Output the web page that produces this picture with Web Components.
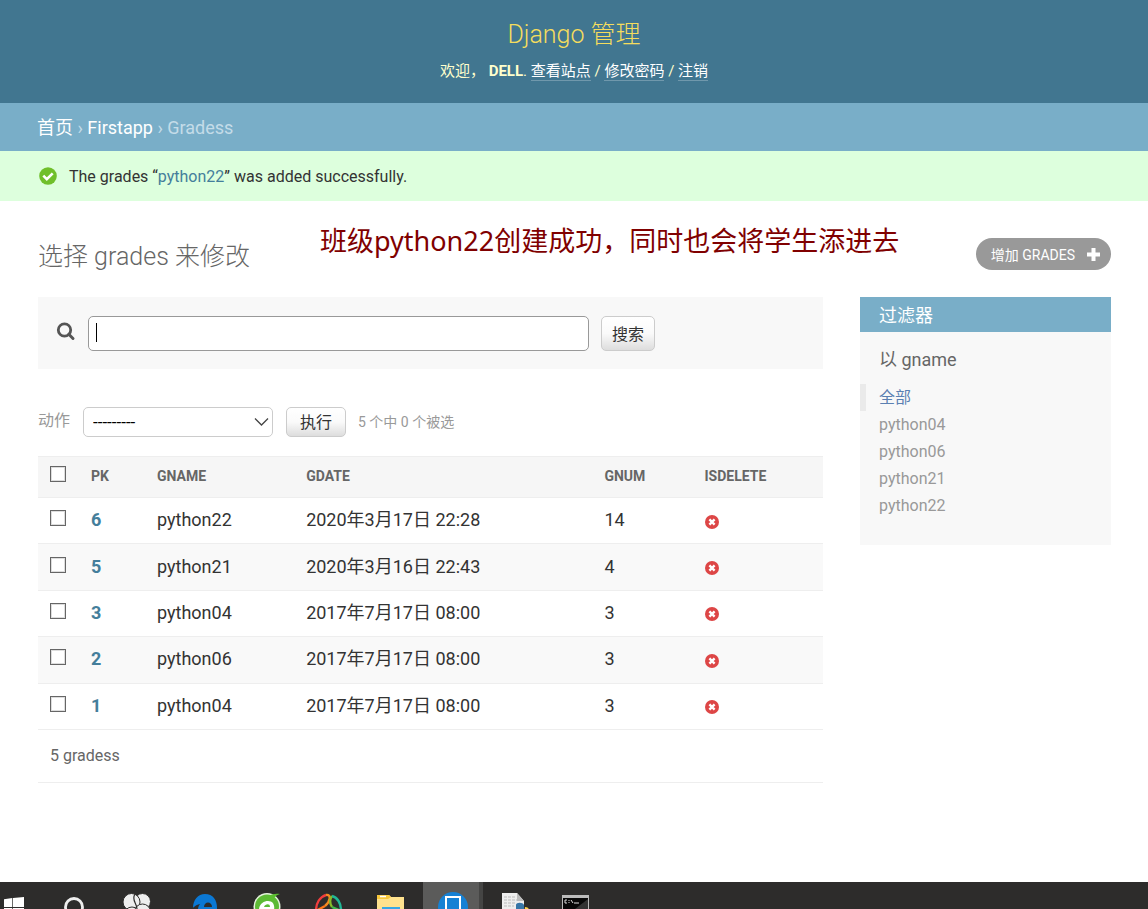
<!DOCTYPE html>
<html lang="zh-CN">
<head>
<meta charset="utf-8">
<title>选择 grades 来修改 | Django 管理</title>
<style>
  body { margin: 0; background: #fff; color: #333; font-family: Roboto, "Noto Sans CJK SC", sans-serif; font-size: 16px; }
</style>
</head>
<body>
<admin-page>
  <site-header slot="header" user="DELL">Django 管理</site-header>
  <bread-crumbs slot="header"></bread-crumbs>
  <success-message slot="header">The grades “<a href="#python22">python22</a>” was added successfully.</success-message>
  <page-note slot="note">班级python22创建成功，同时也会将学生添进去</page-note>
  <page-title slot="title">选择 grades 来修改</page-title>
  <add-button slot="title">增加 GRADES</add-button>
  <search-bar slot="list"></search-bar>
  <action-bar slot="list"></action-bar>
  <result-table slot="list"></result-table>
  <filter-panel slot="filter"></filter-panel>
  <task-bar slot="footer"></task-bar>
</admin-page>

<script>
const define = (name, html, setup) => {
  const template = document.createElement('template');
  template.innerHTML = html;
  customElements.define(name, class extends HTMLElement {
    constructor() {
      super();
      this.attachShadow({ mode: 'open' }).append(template.content.cloneNode(true));
    }
    connectedCallback() { if (setup) setup(this, this.shadowRoot); }
  });
};

define('admin-page', `
<style>
  :host { display: flex; flex-direction: column; min-height: 100vh; }
  main { flex: 1; position: relative; padding: 36px 37px 40px 38px; }
  .title { display: flex; justify-content: space-between; align-items: flex-start; height: 60px; }
  .columns { display: flex; align-items: flex-start; gap: 37px; }
  .list { flex: 1; min-width: 0; }
  .filter { flex: 0 0 251px; }
  .note { position: absolute; top: 20px; left: 320px; }
</style>
<slot name="header"></slot>
<main>
  <div class="title"><slot name="title"></slot></div>
  <div class="columns">
    <div class="list"><slot name="list"></slot></div>
    <div class="filter"><slot name="filter"></slot></div>
  </div>
  <div class="note"><slot name="note"></slot></div>
</main>
<slot name="footer"></slot>`);

define('site-header', `
<style>
  :host { display: block; background: #417690; color: #ffc; text-align: center; padding: 18px 37px 20px; }
  h1 { margin: 0; font-size: 25px; line-height: 34px; font-weight: 300; color: #f5dd5d; }
  nav { margin-top: 8px; font-size: 15px; line-height: 23px; }
  a { color: #fff; text-decoration: none; border-bottom: 1px solid rgba(255,255,255,.25); }
</style>
<h1><slot></slot></h1>
<nav>欢迎， <strong></strong>. <a href="#site">查看站点</a> / <a href="#password">修改密码</a> / <a href="#logout">注销</a></nav>`,
(host, root) => { root.querySelector('strong').textContent = host.getAttribute('user'); });

define('bread-crumbs', `
<style>
  :host { display: block; background: #79aec8; color: #c4dce8; padding: 13px 37px 11px; font-size: 18px; line-height: 24px; }
  a { color: #fff; text-decoration: none; }
</style>
<nav><a href="#home">首页</a> › <a href="#firstapp">Firstapp</a> › Gradess</nav>`);

define('success-message', `
<style>
  :host { display: flex; align-items: center; gap: 12px; background: #dfd; padding: 14px 39px 12px; font-size: 16px; line-height: 24px; }
  svg { width: 18px; height: 18px; margin-bottom: 2px; }
  ::slotted(a) { color: #447e9b; text-decoration: none; }
</style>
<svg viewBox="0 0 18 18"><circle cx="9" cy="9" r="8.8" fill="#70bf2b"/><path d="M4.300 8.700 7.800 12.200 13.700 6.300" fill="none" stroke="#fff" stroke-width="2.600"/></svg>
<span><slot></slot></span>`);

define('page-note', `
<style>:host { display: block; color: #800000; font: 27px/40px "Noto Sans", "Noto Sans CJK SC", sans-serif; white-space: nowrap; }</style>
<slot></slot>`);

define('page-title', `
<style>h1 { margin: 0; font-size: 25px; line-height: 40px; font-weight: 300; color: #666; }</style>
<h1><slot></slot></h1>`);

define('add-button', `
<style>
  a { display: flex; align-items: center; gap: 12px; height: 32px; padding: 0 11px 0 15px; margin-top: 1px; border-radius: 16px; background: #999; color: #fff; font-size: 14px; text-decoration: none; }
  svg { width: 13px; height: 13px; }
</style>
<a href="#add"><slot></slot><svg viewBox="0 0 13 13"><path d="M6.500 0v13M0 6.500h13" stroke="#fff" stroke-width="4"/></svg></a>`);

define('search-bar', `
<style>
  form { display: flex; align-items: center; background: #f8f8f8; height: 72px; padding: 0 18px; margin: 0; }
  svg { width: 20px; height: 20px; margin: 0 12px 2px 0; display: block; }
  .field { position: relative; flex: 0 1 501px; margin-right: 12px; }
  input { display: block; box-sizing: border-box; width: 100%; height: 35px; border: 1px solid #999; border-radius: 5px; padding: 0 7px; font: inherit; background: #fff; outline: none; }
  .caret { position: absolute; left: 8px; top: 7px; width: 1px; height: 19px; background: #000; }
  button { height: 35px; padding: 0 10px; border: 1px solid #ccc; border-radius: 5px; background: linear-gradient(#fff, #fafafa 50%, #ddd); color: #333; font: inherit; }
</style>
<form>
  <label for="q" aria-label="搜索"><svg viewBox="0 0 20 20"><circle cx="8.500" cy="8" r="6.200" fill="none" stroke="#555" stroke-width="2.800"/><path d="m12.800 12.300 4.200 4.200" stroke="#555" stroke-width="3" stroke-linecap="round"/></svg></label>
  <span class="field"><input id="q" type="text"><i class="caret"></i></span>
  <button type="button">搜索</button>
</form>`);

define('action-bar', `
<style>
  :host { display: flex; align-items: center; height: 30px; padding: 38px 0 19px; color: #999; font-size: 16px; }
  label { display: flex; align-items: center; gap: 13px; line-height: 26px; }
  .text { padding-bottom: 2px; }
  .select { position: relative; display: block; width: 190px; }
  select { appearance: none; display: block; box-sizing: border-box; width: 100%; height: 30px; border: 1px solid #ccc; border-radius: 5px; background: #fff; color: #000; padding: 0 9px; font: inherit; font-size: 17px; }
  svg { position: absolute; right: 4px; top: 10px; width: 15px; height: 10px; pointer-events: none; }
  button { height: 30px; padding: 0 13px 2px; margin: 0 12px 0 13px; border: 1px solid #ccc; border-radius: 5px; background: linear-gradient(#fff, #fafafa 50%, #ddd); color: #333; font: inherit; }
  .count { font-size: 14px; padding-bottom: 2px; }
</style>
<label><span class="text">动作</span><span class="select"><select><option>---------</option><option>删除所选的 gradess</option></select><svg viewBox="0 0 15 10"><path d="m1 1.500 6.500 6.500 6.500-6.500" fill="none" stroke="#444" stroke-width="1.300"/></svg></span></label>
<button type="button">执行</button>
<span class="count">5 个中 0 个被选</span>`);

define('result-table', `
<style>
  table { box-sizing: border-box; width: 100%; height: 274px; table-layout: fixed; border-collapse: collapse; }
  th, td { box-sizing: border-box; padding: 0 10px 2px; text-align: left; vertical-align: middle; border-bottom: 1px solid #eee; }
  thead tr { height: 41px; }
  thead th { border-top: 1px solid #eee; background: #f6f6f6; color: #666; font-size: 14px; font-weight: 700; }
  tbody th, tbody td { padding-bottom: 1px; font-size: 18px; line-height: 24px; }
  tbody tr:nth-child(even) { background: #f9f9f9; }
  .check { width: 43px; padding-left: 12px; padding-right: 8px; }
  .pk { width: 66px; } .gname { width: 19%; } .gdate { width: 38%; } .gnum { width: 100px; }
  a { color: #447e9b; text-decoration: none; font-weight: 700; }
  input { appearance: none; display: block; box-sizing: border-box; width: 16px; height: 16px; margin: 0 0 4px; border: 1px solid #666; background: #fff; box-shadow: inset 0 0 0 1px #ddd; }
  svg { display: block; width: 14px; height: 14px; margin: 3px 0 0 1px; }
  p { margin: 0; padding: 0 12px; line-height: 52px; font-size: 16px; color: #666; border-bottom: 1px solid #eee; }
</style>
<table>
  <thead><tr><th class="check"><input type="checkbox" aria-label="全选"></th><th class="pk">PK</th><th class="gname">GNAME</th><th class="gdate">GDATE</th><th class="gnum">GNUM</th><th>ISDELETE</th></tr></thead>
  <tbody></tbody>
</table>
<p>5 gradess</p>`, (host, root) => {
  const rows = [
    [6, 'python22', '2020年3月17日 22:28', 14],
    [5, 'python21', '2020年3月16日 22:43', 4],
    [3, 'python04', '2017年7月17日 08:00', 3],
    [2, 'python06', '2017年7月17日 08:00', 3],
    [1, 'python04', '2017年7月17日 08:00', 3]
  ];
  root.querySelector('tbody').innerHTML = rows.map(([pk, name, date, num]) => `
    <tr><td class="check"><input type="checkbox" aria-label="${pk}"></td><th><a href="#${pk}">${pk}</a></th><td>${name}</td><td>${date}</td><td>${num}</td>
    <td><svg viewBox="0 0 14 14" role="img" aria-label="False"><circle cx="7" cy="7" r="7" fill="#dd4646"/><path d="m4.400 4.400 5.200 5.200m0-5.200-5.200 5.200" stroke="#fff" stroke-width="2.400"/></svg></td></tr>`).join('');
});

define('filter-panel', `
<style>
  :host { display: block; background: #f8f8f8; padding-bottom: 26px; }
  h2 { margin: 0; padding: 2px 19px 0; background: #79aec8; color: #fff; font-size: 18px; line-height: 33px; font-weight: 400; }
  h3 { margin: 16px 19px 12px; color: #666; font-size: 18px; line-height: 24px; font-weight: 400; }
  ul { list-style: none; margin: 0; padding: 0; font-size: 16px; line-height: 27px; }
  li { padding-left: 19px; height: 27px; }
  li.selected { border-left: 6px solid #eaeaea; padding-left: 13px; }
  a { color: #999; text-decoration: none; }
  .selected a { color: #5b80b2; }
</style>
<h2>过滤器</h2>
<h3>以 gname</h3>
<ul>
  <li class="selected"><a href="#all">全部</a></li>
  <li><a href="#python04">python04</a></li>
  <li><a href="#python06">python06</a></li>
  <li><a href="#python21">python21</a></li>
  <li><a href="#python22">python22</a></li>
</ul>`);

define('task-bar', `
<style>
  :host { display: block; height: 27px; overflow: hidden; background: #2d2c2b; }
  ul { display: flex; list-style: none; margin: 0; padding: 0; }
  li { flex: 0 0 62px; min-width: 0; height: 50px; }
  li:first-child { flex-basis: 43px; }
  li.active { flex-basis: 56px; margin-left: 8px; background: #5b5b5a; border-right: 4px solid #454544; }
  svg { display: block; width: 62px; height: 50px; }
</style>
<ul>
  <li><svg viewBox="0 0 62 50"><path d="M4 17.300 12.300 16v9H4zM13 15.900 24 15v10H13zM4 26h8.300v9L4 33.500zM13 26h11v10.500L13 35z" fill="#fff"/></svg></li>
  <li><svg viewBox="0 0 62 50"><circle cx="31" cy="25" r="8.500" fill="none" stroke="#eee" stroke-width="2.800"/></svg></li>
  <li><svg viewBox="0 0 62 50"><g fill="#eee" stroke="#2d2c2b" stroke-width="1"><circle cx="37.500" cy="19.500" r="8"/><circle cx="26.500" cy="20" r="8.500"/><circle cx="27" cy="33" r="8"/><circle cx="37.500" cy="30" r="8"/></g><path d="M30 12c-4 6 2 9 2 15" fill="none" stroke="#2d2c2b" stroke-width="1.200"/></svg></li>
  <li><svg viewBox="0 0 62 50"><path d="M26 28c0 7 9 10 16 6v5C31 45 20 38 20 28c0-5 3-8 8-9-3 1-4 2-6 3-5 1-7 4-7 4 0-8 5-14 12-14 8 0 12 6 12 14v2H26zm0-3h8c0-6-8-6-8 0z" transform="translate(11)" fill="#0b78d4"/></svg></li>
  <li><svg viewBox="0 0 62 50"><g transform="translate(7)"><circle cx="31" cy="24.500" r="13.500" fill="#e4f3dc"/><circle cx="31" cy="24.500" r="12" fill="#5dba35"/><path d="M38 28H23c0-6 5-9 9-9 5 0 7 4 6 9zm-4-3c0-4-5-3-6 0z" fill="#fff"/><path d="M28 18c4-5 9-7 16-6-4 1-5 3-8 7-2-2-5-2-8-1z" fill="#5bbd31"/></g></svg></li>
  <li><svg viewBox="0 0 62 50"><g fill="none" stroke-width="2.400" transform="translate(-7)"><path d="M32 29c0-8 4-14 10-16" stroke="#f13d3d"/><path d="M42 13c6-1 4 7-1 11" stroke="#f48b20"/><path d="m32 29 9-5" stroke="#ff7719"/><path d="M48 14c-3 4-2 8 0 11" stroke="#88bb28"/><path d="M48 14c5 1 9 7 9 14" stroke="#20b796"/><path d="m48 25 9 4" stroke="#42b84b"/></g></svg></li>
  <li><svg viewBox="0 0 62 50"><g transform="translate(2)"><path d="M22 13h12l2 2h13v23H22z" fill="#ffe28e"/><path d="M22 13h12l2 2-3 2H22z" fill="#f8c83c"/><path d="M25 14.500h6" stroke="#fff" stroke-width="1.500"/><path d="M27 25h18v10H27z" fill="#37a7e5"/></g></svg></li>
  <li class="active"><svg viewBox="0 0 62 50"><circle cx="30" cy="25" r="15" fill="#1681d4"/><path d="M23 15h14v24H23z" fill="#1681d4" stroke="#fff" stroke-width="2"/></svg></li>
  <li><svg viewBox="0 0 62 50"><path d="M19 11h15l7 8v30H19z" fill="#eee"/><path d="M34 11v8h7z" fill="#bbb"/><path d="M21 15h12M21 18h13M21 21h11M21 24h10" stroke="#bbb" stroke-dasharray="3 1"/><path d="M33 27v-4c0-3 7-3 8 0v5H31v8z" fill="#3776a8"/><path d="M42 25c5 0 5 5 4 9h-5z" fill="#ffd34b"/></svg></li>
  <li><svg viewBox="0 0 62 50"><path d="M17 13h27v25H17z" fill="#bbb"/><path d="M18 16h25v22H18z" fill="#080808"/><path d="M43 17v10H30z" fill="#333"/><path d="M22 18h-2v3h2m2-3v1m0 1v1m2-3 2 3m1 0h5" fill="none" stroke="#ddd" stroke-width="1"/></svg></li>
</ul>`);
</script>
</body>
</html>
